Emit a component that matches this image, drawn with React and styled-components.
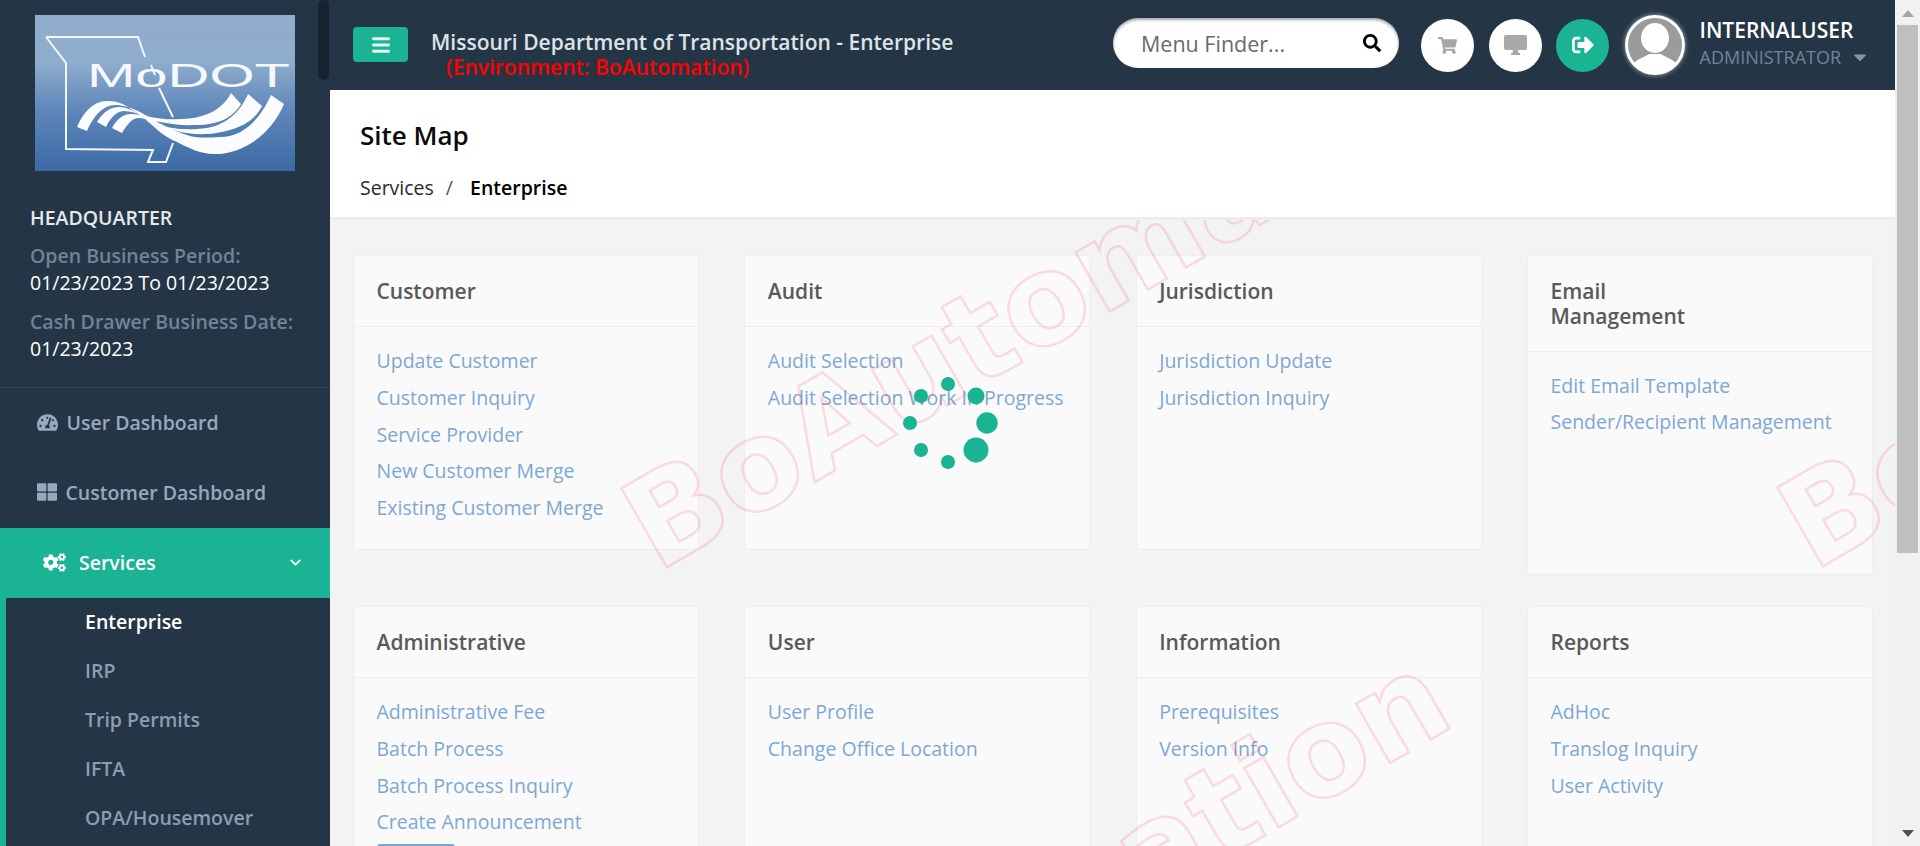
import React from "react";
import styled, { createGlobalStyle } from "styled-components";
import {
  FaBars,
  FaCaretDown,
  FaCogs,
  FaSearch,
  FaShoppingCart,
  FaSignOutAlt,
  FaTachometerAlt,
  FaThLarge,
} from "react-icons/fa";
import { ChevronDown } from "lucide-react";

const GREEN = "#1ab394";
const NAVY = "#243646";

const GlobalStyle = createGlobalStyle`
  html, body {
    margin: 0;
    height: 100%;
    overflow: hidden;
    font-family: "Open Sans", "Liberation Sans", sans-serif;
  }
`;

const Page = styled.div`
  display: flex;
  height: 100vh;
  overflow: hidden;
  background: #f3f3f4;
`;

/* ---------- sidebar ---------- */
const Sidebar = styled.aside`
  position: relative;
  flex: 0 0 330px;
  background: ${NAVY};
  overflow: hidden;
`;

const SideThumb = styled.div`
  position: absolute;
  top: 0;
  right: 1px;
  width: 11px;
  height: 80px;
  border-radius: 5px;
  background: #17232e;
`;

const LogoWrap = styled.div`
  padding: 15px 0 0 35px;
  line-height: 0;
`;

const Office = styled.div`
  padding: 35px 0 25px 30px;
  border-bottom: 1px solid #36495a;
`;

const OfficeName = styled.div`
  font-size: 19.5px;
  font-weight: 600;
  line-height: 24px;
  color: #e6e8ea;
  margin-bottom: 12px;
`;

const OfficeLabel = styled.div`
  font-size: 19.5px;
  font-weight: 600;
  line-height: 27px;
  color: #70839a;
`;

const OfficeValue = styled.div`
  font-size: 19.5px;
  line-height: 27px;
  color: #fff;
  margin-bottom: 12px;
  &:last-child {
    margin-bottom: 0;
  }
`;

const NavItem = styled.div`
  display: flex;
  align-items: center;
  box-sizing: border-box;
  height: 70px;
  padding-bottom: 2px;
  padding-left: ${(p) => (p.$active ? "43px" : "37px")};
  gap: ${(p) => (p.$active ? "13px" : "8.5px")};
  background: ${(p) => (p.$active ? GREEN : "transparent")};
  color: ${(p) => (p.$active ? "#fff" : "#9aa8bf")};
  font-size: 19.5px;
  font-weight: 600;
  svg {
    font-size: ${(p) => p.$icon}px;
    flex: none;
  }
`;

const NavArrow = styled.span`
  margin-left: auto;
  margin-right: 26px;
  display: flex;
`;

const SubMenu = styled.div`
  border-left: 6px solid ${GREEN};
  padding-left: 79px;
  height: 300px;
`;

const SubItem = styled.div`
  height: 49px;
  line-height: 47px;
  font-size: 19.5px;
  font-weight: 600;
  color: ${(p) => (p.$active ? "#fff" : "#8c9cb5")};
`;

/* ---------- top bar ---------- */
const Main = styled.div`
  flex: 1;
  min-width: 0;
  display: flex;
  flex-direction: column;
`;

const TopBar = styled.header`
  flex: 0 0 90px;
  display: flex;
  align-items: center;
  background: ${NAVY};
  padding-left: 23px;
`;

const MenuButton = styled.div`
  flex: none;
  width: 55px;
  height: 35px;
  margin-right: 23px;
  margin-top: -1px;
  border-radius: 4px;
  background: ${GREEN};
  color: #e6f5f1;
  display: flex;
  align-items: center;
  justify-content: center;
  svg {
    font-size: 20px;
  }
`;

const TitleBlock = styled.div`
  align-self: flex-start;
  width: 682px;
  flex: none;
  padding-top: 30px;
  font-size: 21px;
  line-height: 25px;
  font-weight: 600;
`;

const AppTitle = styled.div`
  color: #dfe3e7;
`;

const EnvTitle = styled.div`
  color: #f00;
  padding-left: 15px;
`;

const Search = styled.div`
  flex: none;
  box-sizing: border-box;
  width: 286px;
  height: 50px;
  margin-right: 22px;
  margin-top: -4px;
  border-radius: 25px;
  background: #fff;
  box-shadow: inset 0 2px 3px rgba(0, 0, 0, 0.35);
  display: flex;
  align-items: center;
  justify-content: space-between;
  padding: 0 18px 0 28px;
  font-size: 21.5px;
  color: #676a6c;
  svg {
    color: #000;
    font-size: 18px;
  }
`;

const RoundButton = styled.div`
  flex: none;
  width: 53px;
  height: 53px;
  margin-right: 14.5px;
  border-radius: 50%;
  background: ${(p) => (p.$green ? GREEN : "#fff")};
  color: ${(p) => (p.$green ? "#fff" : "#a7a7a7")};
  display: flex;
  align-items: center;
  justify-content: center;
  svg {
    font-size: ${(p) => p.$size || 20}px;
  }
`;

const Avatar = styled.div`
  flex: none;
  width: 60px;
  height: 60px;
  margin: 0 15px 0 1px;
  border-radius: 50%;
  box-shadow: 0 0 5px rgba(255, 255, 255, 0.6);
  line-height: 0;
`;

const UserBlock = styled.div`
  flex: none;
  margin-top: -5px;
`;

const UserName = styled.div`
  font-size: 21px;
  line-height: 28px;
  font-weight: 600;
  color: #fff;
`;

const UserRole = styled.div`
  display: flex;
  align-items: center;
  gap: 9px;
  font-size: 18px;
  line-height: 26px;
  color: #70839a;
  svg {
    font-size: 20px;
    color: #8496ab;
  }
`;

/* ---------- page heading ---------- */
const Heading = styled.div`
  flex: 0 0 130px;
  box-sizing: border-box;
  background: #fff;
  border-bottom: 3px solid #ebedef;
  padding: 28px 0 0 30px;
`;

const PageTitle = styled.h2`
  margin: 0;
  font-size: 26px;
  line-height: 35px;
  font-weight: 600;
  color: #0a0a0a;
`;

const Crumbs = styled.div`
  display: flex;
  margin-top: 22px;
  font-size: 19.5px;
  line-height: 26px;
  color: #2a2a2a;
`;

const CrumbSep = styled.span`
  margin: 0 17px 0 12px;
  color: #555;
`;

const CrumbCurrent = styled.strong`
  font-weight: 600;
  color: #000;
`;

/* ---------- cards ---------- */
const Content = styled.main`
  position: relative;
  flex: 1;
  min-height: 0;
  overflow: hidden;
`;

const Grid = styled.div`
  display: grid;
  grid-template-columns: repeat(4, 346px);
  column-gap: 45.33px;
  row-gap: 31.5px;
  align-items: start;
  padding: 35px 0 0 23px;
`;

const Card = styled.section`
  box-sizing: border-box;
  background: #fafafa;
  border: 1px solid #eee;
  border-radius: 3px;
`;

const CardHead = styled.div`
  box-sizing: border-box;
  padding: 23px 140px 22.5px 22.5px;
  border-bottom: 1px solid #eee;
  font-size: 21px;
  line-height: 24.5px;
  font-weight: 600;
  color: #595959;
`;

const CardBody = styled.div`
  box-sizing: border-box;
  min-height: 222px;
  padding: 16px 22.5px 20px;
`;

const CardLink = styled.div`
  font-size: 19.5px;
  line-height: 36.8px;
  color: #7ca8d4;
`;

const MoreButton = styled.div`
  width: 78px;
  height: 30px;
  margin-top: 3px;
  border-radius: 3px;
  background: #7ca8d4;
`;

const Overlay = styled.svg`
  position: absolute;
  left: 0;
  top: 0;
  width: 100%;
  height: 100%;
  pointer-events: none;
`;

const Mark = styled.text`
  font-family: "DejaVu Sans", Verdana, sans-serif;
  font-size: 125px;
  font-weight: 700;
  fill: none;
  stroke: rgba(255, 30, 60, 0.14);
  stroke-width: 2.5px;
`;

/* ---------- scrollbar ---------- */
const PageScroll = styled.div`
  flex: 0 0 25px;
  display: flex;
  flex-direction: column;
  align-items: center;
  background: #f1f1f1;
`;

const ScrollArrow = styled.div`
  flex: none;
  width: 0;
  height: 0;
  margin: ${(p) => (p.$down ? "auto 0 9px" : "10px 0 8px")};
  border-left: 6px solid transparent;
  border-right: 6px solid transparent;
  ${(p) => (p.$down ? "border-top: 7px solid #505050;" : "border-bottom: 7px solid #a3a3a3;")}
`;

const ScrollThumb = styled.div`
  flex: none;
  width: 21px;
  height: 528px;
  background: #bfbfbf;
`;

const Logo = () => (
  <svg width="260" height="156" viewBox="0 0 260 156">
    <defs>
      <linearGradient id="logoBg" x1="0" y1="0" x2="0" y2="1">
        <stop offset="0" stopColor="#90adcb" />
        <stop offset="0.3" stopColor="#8fadcc" />
        <stop offset="0.6" stopColor="#5f88bb" />
        <stop offset="1" stopColor="#3c69a5" />
      </linearGradient>
    </defs>
    <rect width="260" height="156" fill="url(#logoBg)" />
    <path
      d="M11 22H103L110 42M116 50L120 60M124 73L138 102M138 128L131 147H113L118 135L31 134V48L11 22"
      fill="none"
      stroke="#f4f7fa"
      strokeWidth="2"
    />
    <text
      x="52"
      y="72"
      fontFamily="Liberation Sans, sans-serif"
      fontSize="34"
      fill="#f6f8fb"
      textLength="203"
      lengthAdjust="spacingAndGlyphs"
    >
      MoDOT
    </text>
    <g fill="#fbfcfd">
      <path d="M42 112C48 98 58 86 72 86C88 86 96 94 105 100C118 110 128 122 142 127C155 134 167 139 178 139C205 140 235 122 249 89L236 80C228 98 212 122 185 122C170 123 160 123 152 120C128 112 118 104 105 97C95 92 88 90 80 90C68 90 58 102 52 116Z" />
      <path d="M62 107C68 97 76 92 84 92C96 92 110 103 125 110C140 115 155 115 172 113C190 110 205 98 213 79L227 91C220 105 205 116 172 119C150 120 135 115 122 108C110 100 98 96 88 96C80 97 75 104 71 112Z" />
      <path d="M77 113C82 104 88 99 96 99C108 99 125 106 145 104C160 104 185 100 196 78L206 89C198 102 185 110 160 110C140 111 120 106 105 103C97 102 92 110 87 118Z" />
    </g>
  </svg>
);

const AvatarImage = () => (
  <svg width="60" height="60" viewBox="0 0 60 60">
    <circle cx="30" cy="30" r="28.5" fill="#9b9b9b" stroke="#fff" strokeWidth="3" />
    <ellipse cx="30" cy="23" rx="14" ry="15" fill="#fff" />
    <path d="M8 49C14 43 20 42 24 39H36C40 42 46 43 52 49C47 55 39 58 30 58C21 58 13 55 8 49Z" fill="#fff" />
  </svg>
);

const MonitorIcon = () => (
  <svg width="23" height="20" viewBox="0 0 23 20" fill="#a9a9a9">
    <rect width="23" height="15" rx="2" />
    <path d="M9 15h5l.5 3H16v2H7v-2h1.500z" />
  </svg>
);

const spinnerDots = [
  [948, 384, 7],
  [976, 396, 8.5],
  [987, 423, 10.7],
  [976, 450, 12.5],
  [948, 462, 7],
  [921, 450, 7],
  [910, 423, 7],
  [921, 396, 7],
];

const marks = [
  [657, 573],
  [1813, 572],
  [588, 1226],
];

const cards = [
  {
    title: "Customer",
    links: ["Update Customer", "Customer Inquiry", "Service Provider", "New Customer Merge", "Existing Customer Merge"],
  },
  { title: "Audit", links: ["Audit Selection", "Audit Selection Work In Progress"] },
  { title: "Jurisdiction", links: ["Jurisdiction Update", "Jurisdiction Inquiry"] },
  { title: "Email Management", links: ["Edit Email Template", "Sender/Recipient Management"] },
  {
    title: "Administrative",
    links: ["Administrative Fee", "Batch Process", "Batch Process Inquiry", "Create Announcement"],
    more: true,
  },
  { title: "User", links: ["User Profile", "Change Office Location"] },
  { title: "Information", links: ["Prerequisites", "Version Info"] },
  { title: "Reports", links: ["AdHoc", "Translog Inquiry", "User Activity"] },
];

const subItems = ["Enterprise", "IRP", "Trip Permits", "IFTA", "OPA/Housemover"];

const App = () => {
  return (
    <Page>
      <GlobalStyle />
      <Sidebar>
        <SideThumb />
        <LogoWrap>
          <Logo />
        </LogoWrap>
        <Office>
          <OfficeName>HEADQUARTER</OfficeName>
          <OfficeLabel>Open Business Period:</OfficeLabel>
          <OfficeValue>01/23/2023 To 01/23/2023</OfficeValue>
          <OfficeLabel>Cash Drawer Business Date:</OfficeLabel>
          <OfficeValue>01/23/2023</OfficeValue>
        </Office>
        <nav>
          <NavItem $icon={21}>
            <FaTachometerAlt />
            User Dashboard
          </NavItem>
          <NavItem $icon={20}>
            <FaThLarge />
            Customer Dashboard
          </NavItem>
          <NavItem $active $icon={23}>
            <FaCogs />
            Services
            <NavArrow>
              <ChevronDown size={17} strokeWidth={2.5} />
            </NavArrow>
          </NavItem>
          <SubMenu>
            {subItems.map((item, i) => (
              <SubItem key={item} $active={i === 0}>
                {item}
              </SubItem>
            ))}
          </SubMenu>
        </nav>
      </Sidebar>

      <Main>
        <TopBar>
          <MenuButton>
            <FaBars />
          </MenuButton>
          <TitleBlock>
            <AppTitle>Missouri Department of Transportation - Enterprise</AppTitle>
            <EnvTitle>(Environment: BoAutomation)</EnvTitle>
          </TitleBlock>
          <Search>
            Menu Finder...
            <FaSearch />
          </Search>
          <RoundButton $size={19}>
            <FaShoppingCart />
          </RoundButton>
          <RoundButton>
            <MonitorIcon />
          </RoundButton>
          <RoundButton $green $size={22}>
            <FaSignOutAlt />
          </RoundButton>
          <Avatar>
            <AvatarImage />
          </Avatar>
          <UserBlock>
            <UserName>INTERNALUSER</UserName>
            <UserRole>
              ADMINISTRATOR
              <FaCaretDown />
            </UserRole>
          </UserBlock>
        </TopBar>

        <Heading>
          <PageTitle>Site Map</PageTitle>
          <Crumbs>
            Services
            <CrumbSep>/</CrumbSep>
            <CrumbCurrent>Enterprise</CrumbCurrent>
          </Crumbs>
        </Heading>

        <Content>
          <Grid>
            {cards.map((card) => (
              <Card key={card.title}>
                <CardHead>{card.title}</CardHead>
                <CardBody>
                  {card.links.map((link) => (
                    <CardLink key={link}>{link}</CardLink>
                  ))}
                  {card.more && <MoreButton />}
                </CardBody>
              </Card>
            ))}
          </Grid>
          <Overlay>
            <g transform="translate(-330 -220)">
              {marks.map(([x, y]) => (
                <Mark key={x} x={x} y={y} transform={`rotate(-30 ${x} ${y})`}>
                  BoAutomation
                </Mark>
              ))}
              <g fill={GREEN}>
                {spinnerDots.map(([x, y, r]) => (
                  <circle key={`${x}-${y}`} cx={x} cy={y} r={r} />
                ))}
              </g>
            </g>
          </Overlay>
        </Content>
      </Main>

      <PageScroll>
        <ScrollArrow />
        <ScrollThumb />
        <ScrollArrow $down />
      </PageScroll>
    </Page>
  );
};

export default App;
